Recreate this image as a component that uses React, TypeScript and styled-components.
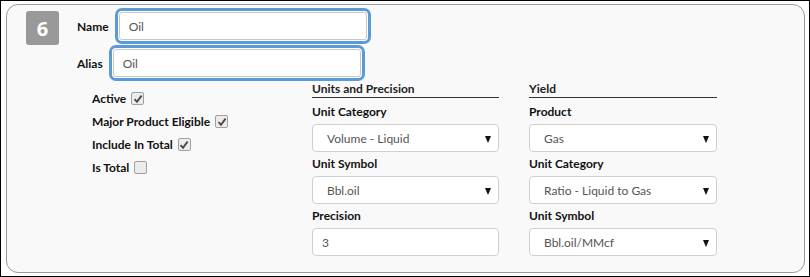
import styled, { createGlobalStyle } from 'styled-components';

const GlobalStyle = createGlobalStyle`
  html, body {
    margin: 0;
    padding: 0;
    background: #ffffff;
  }

  body {
    font-family: Lato, "Open Sans", sans-serif;
    font-size: 12px;
    color: #111;
  }
`;

type Check = { label: string; checked: boolean };

const checks: Check[] = [
  { label: 'Active', checked: true },
  { label: 'Major Product Eligible', checked: true },
  { label: 'Include In Total', checked: true },
  { label: 'Is Total', checked: false },
];

const CheckMark = () => (
  <svg width='10' height='10' viewBox='0 0 10 10'>
    <path d='M1.5 5.2 L4 7.8 L8.6 1.6' fill='none' stroke='#4a4a4a' strokeWidth='1.9' />
  </svg>
);

const Field = ({ label, value, select }: { label: string; value: string; select?: boolean }) => (
  <StyledField>
    <StyledFieldLabel>{label}</StyledFieldLabel>
    <StyledControl $select={select}>
      {value}
      {select && <StyledArrow />}
    </StyledControl>
  </StyledField>
);

function App() {
  return (
    <>
      <GlobalStyle />
      <StyledFrame>
        <StyledPanel>
          <StyledBadge>6</StyledBadge>
          <StyledContent>
            <StyledTopRow>
              <StyledLabel>Name</StyledLabel>
              <StyledFocusInput>Oil</StyledFocusInput>
            </StyledTopRow>
            <StyledTopRow>
              <StyledLabel>Alias</StyledLabel>
              <StyledFocusInput>Oil</StyledFocusInput>
            </StyledTopRow>
            <StyledGrid>
              <StyledChecks>
                {checks.map(item => (
                  <StyledCheckRow key={item.label}>
                    {item.label}
                    <StyledBox>{item.checked && <CheckMark />}</StyledBox>
                  </StyledCheckRow>
                ))}
              </StyledChecks>
              <StyledColumn>
                <StyledHeader>Units and Precision</StyledHeader>
                <Field label='Unit Category' value='Volume - Liquid' select />
                <Field label='Unit Symbol' value='Bbl.oil' select />
                <Field label='Precision' value='3' />
              </StyledColumn>
              <StyledColumn>
                <StyledHeader>Yield</StyledHeader>
                <Field label='Product' value='Gas' select />
                <Field label='Unit Category' value='Ratio - Liquid to Gas' select />
                <Field label='Unit Symbol' value='Bbl.oil/MMcf' select />
              </StyledColumn>
            </StyledGrid>
          </StyledContent>
        </StyledPanel>
      </StyledFrame>
    </>
  );
}

export default App;

const StyledFrame = styled.div`
  width: 810px;
  height: 277px;
  box-sizing: border-box;
  border: 1px solid #000;
  padding: 3px 4px 2px 5px;
`;

const StyledPanel = styled.div`
  display: flex;
  box-sizing: border-box;
  height: 269px;
  border: 1px solid #9a9a9a;
  border-radius: 12px;
  background: #f9f9f9;
  padding: 6px 0 0 19px;
`;

const StyledBadge = styled.div`
  display: flex;
  justify-content: center;
  align-items: center;
  width: 33px;
  height: 34px;
  border-radius: 3px;
  background: #999999;
  color: #fff;
  font-family: "Open Sans", sans-serif;
  font-size: 20px;
  font-weight: 700;
`;

const StyledContent = styled.div`
  display: flex;
  flex-direction: column;
  margin-left: 18px;
  padding-top: 1px;
`;

const StyledTopRow = styled.div`
  display: flex;
  align-items: center;
  gap: 10px;
  margin-bottom: 9px;
`;

const StyledLabel = styled.div`
  font-weight: 700;
  color: #111;
`;

const StyledFocusInput = styled.div`
  box-sizing: border-box;
  width: 248px;
  height: 28px;
  padding: 0 9px;
  display: flex;
  align-items: center;
  background: #fff;
  border: 1px solid #c8c8c8;
  border-radius: 3px;
  box-shadow: 0 0 0 1px #fff, 0 0 0 4px #5b9bd5;
  color: #555;
`;

const StyledGrid = styled.div`
  display: grid;
  grid-template-columns: 205px 187px 188px;
  column-gap: 30px;
  margin-top: -5px;
`;

const StyledChecks = styled.div`
  display: flex;
  flex-direction: column;
  padding: 6px 0 0 15px;
`;

const StyledCheckRow = styled.div`
  display: flex;
  align-items: center;
  gap: 5px;
  height: 23px;
  font-weight: 700;
`;

const StyledBox = styled.span`
  display: flex;
  justify-content: center;
  align-items: center;
  box-sizing: border-box;
  width: 13px;
  height: 13px;
  border: 1px solid #a0a0a0;
  border-radius: 2px;
  background: #ececec;
`;

const StyledColumn = styled.div`
  display: flex;
  flex-direction: column;
  gap: 4px;
`;

const StyledHeader = styled.div`
  height: 16px;
  line-height: 16px;
  font-weight: 700;
  color: #222;
  border-bottom: 1px solid #333;
  margin-bottom: 2px;
`;

const StyledField = styled.div`
  display: flex;
  flex-direction: column;
  gap: 4px;
`;

const StyledFieldLabel = styled.div`
  height: 16px;
  line-height: 16px;
  font-weight: 700;
`;

const StyledControl = styled.div<{ $select?: boolean }>`
  position: relative;
  box-sizing: border-box;
  height: 28px;
  display: flex;
  align-items: center;
  padding: 0 ${({ $select }) => ($select ? '14px' : '9px')};
  background: #fff;
  border: 1px solid #cfcfcf;
  border-radius: 4px;
  color: #555;
`;

const StyledArrow = styled.span`
  position: absolute;
  right: 7px;
  top: 11px;
  width: 0;
  height: 0;
  border-left: 3.5px solid transparent;
  border-right: 3.5px solid transparent;
  border-top: 7px solid #111;
`;
